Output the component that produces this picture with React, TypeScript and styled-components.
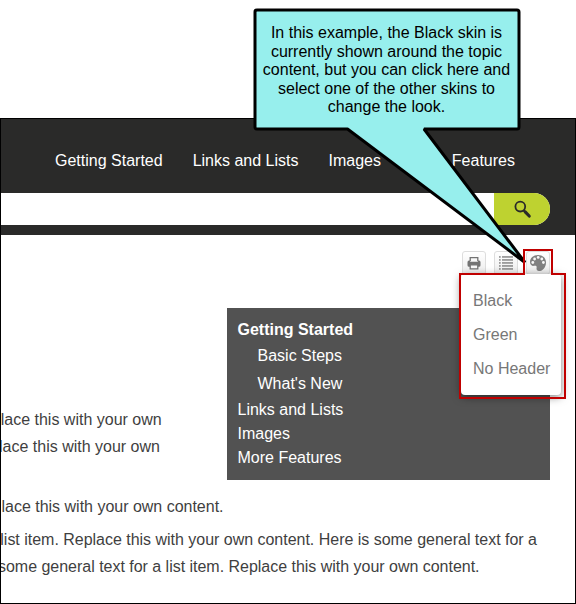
import React from "react";
import styled, { createGlobalStyle } from "styled-components";

const GlobalStyle = createGlobalStyle`
  * { box-sizing: border-box; }
  body { margin: 0; background: #fff; font-family: "Liberation Sans", Arial, sans-serif; font-size: 16px; }
`;

const Page = styled.div`
  position: relative;
  width: 576px;
  height: 604px;
  padding-top: 118px;
  overflow: hidden;
`;

const Frame = styled.main`
  height: 486px;
  border: 1px solid #000;
  background: #fff;
  overflow: hidden;
`;

const Header = styled.header`
  height: 116px;
  background: #2a2a29;
`;

const Nav = styled.nav`
  display: flex;
  gap: 30px;
  height: 74px;
  padding: 33px 0 0 54px;
  line-height: 18px;
  color: #fff;
  white-space: nowrap;
`;

const SearchBar = styled.div`
  display: flex;
  width: 549px;
  height: 32px;
  background: #fff;
  border-radius: 0 16px 16px 0;
`;

const SearchField = styled.div`
  flex: 1;
`;

const SearchButton = styled.div`
  width: 56px;
  background: #bed230;
  border-radius: 0 16px 16px 0;
  svg { display: block; margin: 7px 0 0 19px; }
`;

const Toolbar = styled.div`
  display: flex;
  justify-content: flex-end;
  gap: 8px;
  padding: 16px 25px 0 0;
  height: 73px;
`;

const ToolButton = styled.div`
  display: flex;
  justify-content: center;
  align-items: center;
  width: 24px;
  height: 24px;
  border: 1px solid #ddd;
  border-radius: 3px;
  background: linear-gradient(#fff, #ededed);
`;

const Content = styled.section`
  position: relative;
  height: 296px;
  color: #3f3f3f;
`;

const SideMenu = styled.aside`
  margin-left: 226px;
  width: 323px;
  height: 172px;
  padding: 10px 0 0 10.5px;
  background: #525252;
  color: #fff;
`;

const MenuItem = styled.div<{ $level?: number; $bold?: boolean }>`
  height: ${(p) => (p.$level ? 28 : 24)}px;
  line-height: ${(p) => (p.$level ? 28 : 24)}px;
  padding-left: ${(p) => (p.$level ?? 0) * 20}px;
  font-weight: ${(p) => (p.$bold ? 700 : 400)};
`;

const SideCopy = styled.div`
  position: absolute;
  left: 0;
  top: 98px;
`;

const LowerCopy = styled.div`
  padding-top: 13px;
`;

const Line = styled.p<{ $shift: number; $after?: number; $track?: number }>`
  margin: 0 0 ${(p) => p.$after ?? 0}px ${(p) => p.$shift}px;
  line-height: 27px;
  white-space: nowrap;
  letter-spacing: ${(p) => p.$track ?? 0}px;
`;

const SkinMenu = styled.div`
  position: absolute;
  left: 461px;
  top: 274px;
  width: 100px;
  height: 121px;
  padding: 10px 0 0 12px;
  border-radius: 4px;
  background: #fff;
  box-shadow: 0 2px 8px rgba(0, 0, 0, 0.5);
  color: #777;
`;

const SkinOption = styled.div`
  height: 34px;
  line-height: 34px;
  white-space: nowrap;
`;

const Overlay = styled.svg`
  position: absolute;
  left: 0;
  top: 0;
`;

const CalloutText = styled.div`
  position: absolute;
  left: 255.5px;
  top: 24px;
  width: 262px;
  color: #000;
`;

const CalloutLine = styled.div`
  height: 18.5px;
  line-height: 18.5px;
  text-align: center;
  white-space: nowrap;
`;

const SearchIcon = () => (
  <svg width="20" height="20" viewBox="0 0 20 20" fill="none" stroke="#2a2a29">
    <circle cx="7.3" cy="6.6" r="4.9" strokeWidth="1.8" />
    <path d="M10.6 10.4 12 11.7" strokeWidth="2" />
    <path d="M12.2 11.9 16.2 16" strokeWidth="3.2" strokeLinecap="round" />
  </svg>
);

const PrintIcon = () => (
  <svg width="14" height="14" viewBox="0 0 14 14">
    <path fill="none" stroke="#737373" strokeWidth="1.3" d="M3.2 5V1.6h7.6V5" />
    <path fill="#737373" d="M2 4.5h1.2v1.2h7.6V4.5H12a1.8 1.8 0 0 1 1.5 1.8V9.2A1.5 1.5 0 0 1 12 10.7H2A1.5 1.5 0 0 1 .5 9.2V6.3A1.8 1.8 0 0 1 2 4.5z" />
    <path fill="#f8f8f8" stroke="#737373" strokeWidth="1.3" d="M3.2 8.9h7.6v4H3.2z" />
  </svg>
);

const ListIcon = () => (
  <svg width="14" height="14" viewBox="0 0 14 14" fill="#777">
    {[1, 4, 7, 10, 13].map((y) => (
      <g key={y}>
        <rect x="0" y={y - 0.7} width="1.7" height="1.3" />
        <rect x="3" y={y - 0.7} width="11" height="1.3" />
      </g>
    ))}
  </svg>
);

const PaletteIcon = () => (
  <svg width="16" height="16" viewBox="0 0 16 16">
    <path fill="#808080" d="M8 0C3.4 0 0 3.2 0 7c0 2.8 2 4.3 4.2 3.8 1.8-.4 2.8.2 2.4 1.9C6.1 14.6 7.2 16 9 16c4 0 7-4 7-8.6C16 3 12.6 0 8 0z" />
    <g fill="#f7f7f7">
      <circle cx="2.8" cy="7.5" r="1.4" />
      <circle cx="4.6" cy="4" r="1.4" />
      <circle cx="8.2" cy="2.4" r="1.4" />
      <circle cx="11.8" cy="4" r="1.4" />
      <circle cx="13.4" cy="7.5" r="1.4" />
    </g>
  </svg>
);

export default function App() {
  return (
    <>
      <GlobalStyle />
      <Page>
        <Frame>
          <Header>
            <Nav>
              <span>Getting Started</span>
              <span>Links and Lists</span>
              <span>Images</span>
              <span>More Features</span>
            </Nav>
            <SearchBar>
              <SearchField />
              <SearchButton><SearchIcon /></SearchButton>
            </SearchBar>
          </Header>
          <Toolbar>
            <ToolButton><PrintIcon /></ToolButton>
            <ToolButton><ListIcon /></ToolButton>
            <ToolButton><PaletteIcon /></ToolButton>
          </Toolbar>
          <Content>
            <SideMenu>
              <MenuItem $bold>Getting Started</MenuItem>
              <MenuItem $level={1}>Basic Steps</MenuItem>
              <MenuItem $level={1}>What's New</MenuItem>
              <MenuItem>Links and Lists</MenuItem>
              <MenuItem>Images</MenuItem>
              <MenuItem>More Features</MenuItem>
            </SideMenu>
            <SideCopy>
              <Line $shift={-0.3}>lace this with your own</Line>
              <Line $shift={-2}>lace this with your own</Line>
            </SideCopy>
            <LowerCopy>
              <Line $shift={0.5} $after={6} $track={-0.01}>lace this with your own content.</Line>
              <Line $shift={-0.7} $track={-0.018}>list item. Replace this with your own content. Here is some general text for a</Line>
              <Line $shift={-3} $track={-0.02}>some general text for a list item. Replace this with your own content.</Line>
            </LowerCopy>
          </Content>
        </Frame>
        <SkinMenu>
          <SkinOption>Black</SkinOption>
          <SkinOption>Green</SkinOption>
          <SkinOption>No Header</SkinOption>
        </SkinMenu>
        <Overlay width="576" height="604" viewBox="0 0 576 604">
          <path
            d="M257 10H517Q519 10 519 12V127Q519 129 517 129H424L525 262.5 347.5 129H257Q255 129 255 127V12Q255 10 257 10Z"
            fill="#97efed"
            stroke="#000"
            strokeWidth="3"
            strokeLinejoin="bevel"
          />
          <path d="M524 274H460V398H565V274H552V250H524Z" fill="none" stroke="#c00000" strokeWidth="2" />
        </Overlay>
        <CalloutText>
          <CalloutLine>In this example, the Black skin is</CalloutLine>
          <CalloutLine>currently shown around the topic</CalloutLine>
          <CalloutLine>content, but you can click here and</CalloutLine>
          <CalloutLine>select one of the other skins to</CalloutLine>
          <CalloutLine>change the look.</CalloutLine>
        </CalloutText>
      </Page>
    </>
  );
}
